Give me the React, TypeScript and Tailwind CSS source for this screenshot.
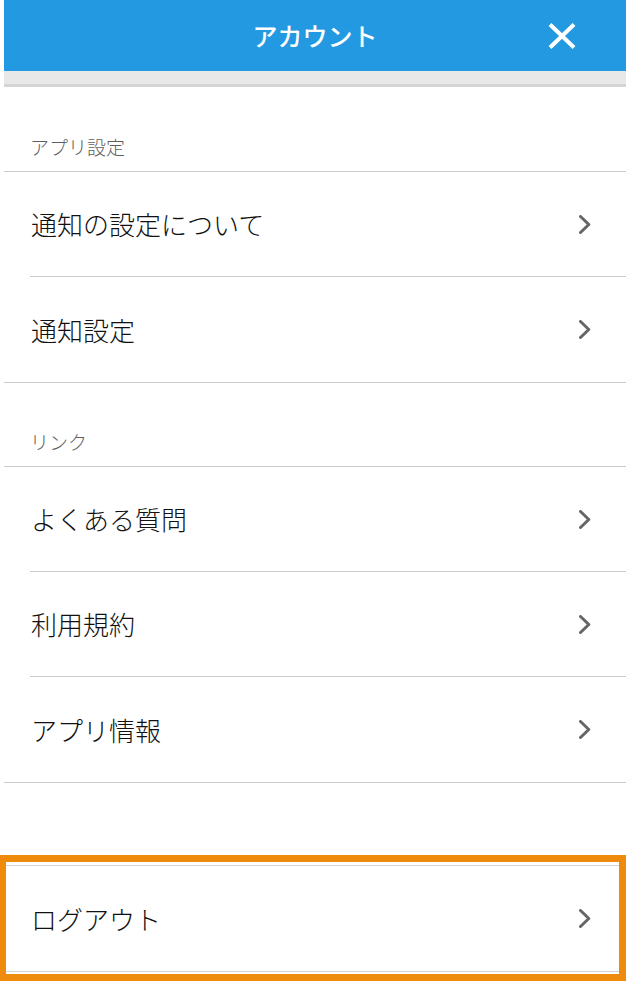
import { ReactNode } from 'react'

const FONT = { fontFamily: '"Noto Sans CJK JP", "Noto Sans", sans-serif' }

function Chevron() {
  return (
    <svg width="12" height="19" viewBox="0 0 12 19" fill="none">
      <path d="M1.5 1.5 L9.8 9.5 L1.5 17.5" stroke="#666666" strokeWidth="3" strokeLinecap="round" strokeLinejoin="round" />
    </svg>
  )
}

function CloseIcon() {
  return (
    <svg width="28" height="26" viewBox="0 0 28 26" fill="none">
      <path d="M2 1.5 L26 24.5 M26 1.5 L2 24.5" stroke="#ffffff" strokeWidth="4" />
    </svg>
  )
}

function SectionLabel({ children, h }: { children: ReactNode; h: string }) {
  return (
    <div className={`${h} flex items-end pb-[12px] pl-[26px] border-b border-[#cbcbcb]`}>
      <span className="text-[19px] leading-[24px] font-light text-[#5e5e5e]">{children}</span>
    </div>
  )
}

function Row({ label, last }: { label: string; last?: boolean }) {
  return (
    <div className={`h-[105px] ml-[26px] pr-[35px] flex items-center justify-between ${last ? '' : 'border-b border-[#cbcbcb]'}`}>
      <span className="pl-[1px] text-[26px] leading-[32px] font-light text-[#111111]">{label}</span>
      <Chevron />
    </div>
  )
}

export default function App() {
  return (
    <div className="relative w-[626px] h-[988px] bg-white overflow-hidden" style={FONT}>
      <div className="pl-[4px]">
        {/* Header */}
        <div className="h-[71px] bg-[#2399e1] flex items-center">
          <div className="w-[78px]" />
          <h1 className="flex-1 text-center text-[25px] font-medium text-white leading-none">アカウント</h1>
          <div className="w-[78px] flex items-center">
            <CloseIcon />
          </div>
        </div>
        <div className="h-[16px] bg-[#e8e8e8] border-b-[3px] border-[#d5d5d5]" />

        {/* App settings */}
        <SectionLabel h="h-[85px]">アプリ設定</SectionLabel>
        <div className="border-b border-[#cbcbcb]">
          <Row label="通知の設定について" />
          <Row label="通知設定" last />
        </div>

        {/* Links */}
        <SectionLabel h="h-[84px]">リンク</SectionLabel>
        <div className="border-b border-[#cbcbcb]">
          <Row label="よくある質問" />
          <Row label="利用規約" />
          <Row label="アプリ情報" last />
        </div>

        {/* Logout */}
        <div className="mt-[82px] h-[107px] pl-[26px] pr-[35px] flex items-center justify-between border-y border-[#d3d3d3]">
          <span className="pl-[1px] text-[26px] leading-[32px] font-light text-[#111111]">ログアウト</span>
          <Chevron />
        </div>
      </div>

      {/* highlight frame */}
      <div className="absolute left-0 top-[855px] w-[626px] h-[126px] border-[7px] border-l-[6px] border-[#ef8b0c] pointer-events-none" />
    </div>
  )
}
